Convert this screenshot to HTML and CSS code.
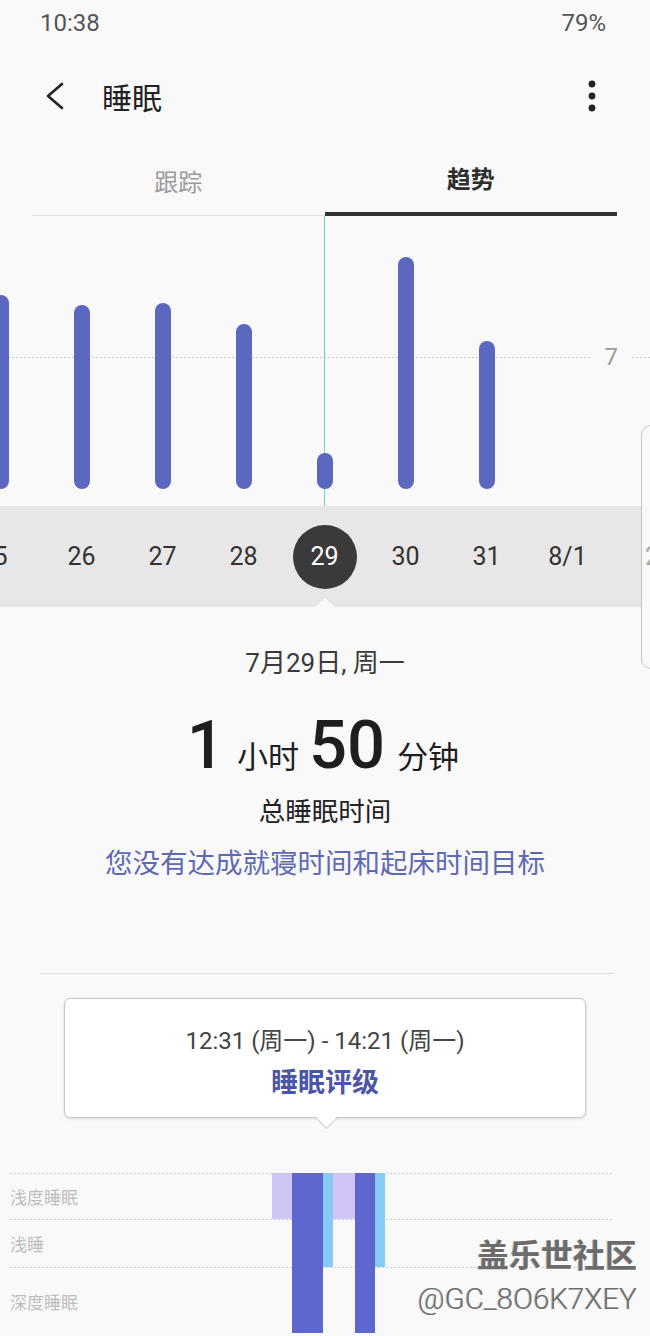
FILE: index.html
```html
<!DOCTYPE html>
<html lang="zh-CN">
<head>
    <meta charset="UTF-8">
    <meta name="viewport" content="width=device-width, initial-scale=1.0">
    <title>睡眠</title>
    <link rel="stylesheet" href="styles.css">
</head>
<body>
    <div class="screen">
        <div class="status-bar">
            <span>10:38</span>
            <span>79%</span>
        </div>

        <div class="app-bar">
            <svg class="back" width="24" height="32" viewBox="0 0 24 32">
                <polyline points="18,4 4,16 18,28" fill="none" stroke="#222" stroke-width="2.6" stroke-linecap="round" stroke-linejoin="round" />
            </svg>
            <h1>睡眠</h1>
            <svg class="more" width="10" height="32" viewBox="0 0 10 32">
                <circle cx="5" cy="4" r="3.4" fill="#222" />
                <circle cx="5" cy="16" r="3.4" fill="#222" />
                <circle cx="5" cy="28" r="3.4" fill="#222" />
            </svg>
        </div>

        <div class="tabs">
            <div class="tab">跟踪</div>
            <div class="tab active">趋势</div>
        </div>

        <div class="chart">
            <div class="goal-line">
                <span class="dots"></span>
                <span class="goal-label">7</span>
                <span class="dots short"></span>
            </div>
            <div class="cursor"></div>
            <div class="bars">
                <div class="col"><div class="bar" style="height: 194px"></div></div>
                <div class="col"><div class="bar" style="height: 184px"></div></div>
                <div class="col"><div class="bar" style="height: 186px"></div></div>
                <div class="col"><div class="bar" style="height: 165px"></div></div>
                <div class="col"><div class="bar" style="height: 36px"></div></div>
                <div class="col"><div class="bar" style="height: 232px"></div></div>
                <div class="col"><div class="bar" style="height: 148px"></div></div>
                <div class="col"></div>
                <div class="col"></div>
            </div>
        </div>

        <div class="days">
            <div class="col">5</div>
            <div class="col">26</div>
            <div class="col">27</div>
            <div class="col">28</div>
            <div class="col"><span class="selected">29</span></div>
            <div class="col">30</div>
            <div class="col">31</div>
            <div class="col">8/1</div>
            <div class="col"></div>
            <span class="notch"></span>
        </div>

        <div class="next-card"><span>2</span></div>

        <div class="summary">
            <p class="date">7月29日, 周一</p>
            <p class="total">
                <span class="num">1</span><span class="unit">小时</span><span class="num">50</span><span class="unit">分钟</span>
            </p>
            <p class="caption">总睡眠时间</p>
            <p class="goal-msg">您没有达成就寝时间和起床时间目标</p>
            <hr class="divider">
            <div class="tooltip">
                <p class="range">12:31 (周一) - 14:21 (周一)</p>
                <p class="rating">睡眠评级</p>
            </div>
        </div>

        <div class="stages">
            <div class="stage-row">浅度睡眠</div>
            <div class="stage-row">浅睡</div>
            <div class="stage-row last">深度睡眠</div>
            <div class="stage-bars">
                <span class="seg light" style="width: 20px; height: 46px"></span>
                <span class="seg deep" style="width: 31px; height: 160px"></span>
                <span class="seg rem" style="width: 10px; height: 94px"></span>
                <span class="seg light" style="width: 22px; height: 46px"></span>
                <span class="seg deep" style="width: 20px; height: 160px"></span>
                <span class="seg rem" style="width: 10px; height: 94px"></span>
            </div>
        </div>

        <div class="watermark">
            <span class="wm-title">盖乐世社区</span>
            <span class="wm-user">@GC_8O6K7XEY</span>
        </div>
    </div>
</body>
</html>
```

FILE: styles.css
```css
body {
    margin: 0;
    background: #f9f9f9;
    font-family: Roboto, "Noto Sans CJK SC", sans-serif;
    color: #333;
    overflow: hidden;
}

p {
    margin: 0;
}

.screen {
    position: relative;
    width: 650px;
    height: 1336px;
    overflow: hidden;
}

.status-bar {
    height: 46px;
    display: flex;
    justify-content: space-between;
    align-items: center;
    padding: 0 44px 0 40px;
    font-size: 24px;
    color: #555;
}

.app-bar {
    height: 100px;
    display: flex;
    align-items: center;
    padding: 0 53px 0 44px;
}

.app-bar h1 {
    flex: 1;
    margin: 0 0 0 34px;
    font-size: 30px;
    font-weight: 400;
    color: #222;
}

.tabs {
    display: flex;
    margin: 0 33px 0 32px;
    height: 70px;
}

.tab {
    flex: 1;
    display: flex;
    align-items: center;
    justify-content: center;
    font-size: 24px;
    color: #9a9a9a;
    border-bottom: 1px solid #e0e0e0;
}

.tab.active {
    color: #2e2e2e;
    font-weight: 700;
    border-bottom: 4px solid #333;
    margin-top: -3px;
}

/* trend chart */
.chart {
    position: relative;
    height: 290px;
}

.bars,
.days {
    display: flex;
    margin-left: -40px;
}

.col {
    flex: 0 0 81px;
    display: flex;
    justify-content: center;
}

.bars {
    height: 273px;
    align-items: flex-end;
}

.bars .col {
    position: relative;
    z-index: 1;
}

.bar {
    width: 16px;
    border-radius: 8px;
    background: #5c68c0;
}

.goal-line {
    position: absolute;
    top: 129px;
    left: 0;
    right: 0;
    display: flex;
    align-items: center;
}

.dots {
    flex: 1;
    height: 1px;
    background-image: linear-gradient(to right, #c8c8c8 50%, transparent 50%);
    background-size: 4px 1px;
}

.dots.short {
    flex: 0 0 18px;
}

.goal-label {
    padding: 0 14px 0 14px;
    font-size: 24px;
    color: #9c9c9c;
    line-height: 1;
}

.cursor {
    position: absolute;
    top: 0;
    bottom: 0;
    left: 324px;
    width: 1px;
    background: #62d2d2;
}

.days {
    position: relative;
    height: 101px;
    width: 682px;
    align-items: center;
    background: #e7e7e7;
    font-size: 25px;
    color: #333;
}

.selected {
    width: 64px;
    height: 64px;
    border-radius: 50%;
    background: #3a3a3a;
    color: #fff;
    display: flex;
    align-items: center;
    justify-content: center;
}

.notch {
    position: absolute;
    left: 355px;
    bottom: 0;
    width: 0;
    height: 0;
    border-left: 10px solid transparent;
    border-right: 10px solid transparent;
    border-bottom: 9px solid #f9f9f9;
}

.next-card {
    position: absolute;
    left: 641px;
    top: 425px;
    width: 40px;
    height: 244px;
    border: 1px solid #c6c6c6;
    border-radius: 10px;
    background: #f9f9f9;
    box-sizing: border-box;
    padding: 116px 0 0 3px;
    font-size: 25px;
    color: #aaa;
}

/* day summary */
.summary {
    text-align: center;
    padding-top: 38px;
}

.date {
    font-size: 26px;
    line-height: 36px;
    color: #3a3a3a;
}

.total {
    margin-top: 24px;
    padding-left: 6px;
    line-height: 80px;
    height: 80px;
    color: #1e1e1e;
}

.num {
    font-size: 67px;
    font-weight: 500;
}

.unit {
    font-size: 31px;
    margin: 0 10px 0 12px;
}

.caption {
    margin-top: 9px;
    font-size: 26.5px;
    line-height: 36px;
    color: #222;
}

.goal-msg {
    margin-top: 16px;
    font-size: 27.5px;
    line-height: 36px;
    color: #5e69b3;
}

.divider {
    margin: 91px 35px 0 40px;
    border: 0;
    border-top: 1px solid #e0e0e0;
}

.tooltip {
    position: relative;
    margin: 24px 64px 0 64px;
    height: 120px;
    box-sizing: border-box;
    padding-top: 24px;
    background: #fff;
    border: 1px solid #c8c8c8;
    border-radius: 6px;
    box-shadow: 0 1px 3px rgba(0, 0, 0, 0.12);
}

.tooltip::after {
    content: "";
    position: absolute;
    left: 254px;
    bottom: -9px;
    width: 14px;
    height: 14px;
    background: #fff;
    border-right: 1px solid #c8c8c8;
    border-bottom: 1px solid #c8c8c8;
    transform: rotate(45deg);
}

.range {
    font-size: 24px;
    line-height: 36px;
    color: #444;
}

.rating {
    margin-top: 6px;
    font-size: 27px;
    line-height: 36px;
    font-weight: 700;
    color: #4b56a6;
}

/* sleep stages */
.stages {
    position: relative;
    margin: 55px 38px 0 10px;
}

.stage-row {
    height: 46px;
    display: flex;
    align-items: center;
    font-size: 17px;
    color: #bdbdbd;
    background-image: linear-gradient(to right, #cfcfcf 50%, transparent 50%);
    background-size: 4px 1px;
    background-repeat: repeat-x;
}

.stage-row + .stage-row {
    height: 48px;
}

.stage-row.last {
    height: 68px;
}

.stage-bars {
    position: absolute;
    top: 0;
    left: 262px;
    display: flex;
    align-items: flex-start;
}

.seg.light {
    background: #cfc6f7;
}

.seg.deep {
    background: #5d67cf;
}

.seg.rem {
    background: #88c9f6;
}

.watermark {
    position: absolute;
    right: 13px;
    bottom: 16px;
    display: flex;
    flex-direction: column;
    align-items: flex-end;
    color: #6c6c6c;
    text-shadow: 1px 1px 0 #fff, -1px 0 0 #bbb;
}

.wm-title {
    font-size: 32px;
    font-weight: 700;
    line-height: 44px;
}

.wm-user {
    font-size: 29.5px;
    line-height: 42px;
    font-weight: 300;
}
```
